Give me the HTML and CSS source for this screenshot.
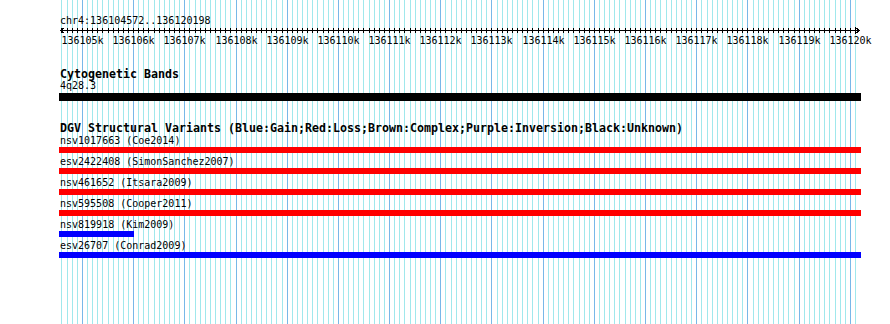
FILE: index.html
```html
<!DOCTYPE html>
<html lang="en">
<head>
  <meta charset="UTF-8">
  <meta name="viewport" content="width=device-width, initial-scale=1.0">
  <link rel="stylesheet" href="styles.css">
</head>
<body>

<div class="panel">
  <svg class="grid" id="grid" width="890" height="324"></svg>

  <div class="tracks">
    <div class="overview">
      <div class="locus">chr4:136104572..136120198</div>
      <svg class="ruler" id="ruler" width="802" height="22"></svg>
    </div>

    <section class="track track-cyto">
      <h2 class="track-title">Cytogenetic Bands</h2>
      <div class="feature">
        <div class="feature-label">4q28.3</div>
        <div class="bar bar-band"></div>
      </div>
    </section>

    <section class="track track-dgv">
      <h2 class="track-title">DGV Structural Variants (Blue:Gain;Red:Loss;Brown:Complex;Purple:Inversion;Black:Unknown)</h2>
      <div class="feature">
        <div class="feature-label">nsv1017663 (Coe2014)</div>
        <div class="bar bar-loss"></div>
      </div>
      <div class="feature">
        <div class="feature-label">esv2422408 (SimonSanchez2007)</div>
        <div class="bar bar-loss"></div>
      </div>
      <div class="feature">
        <div class="feature-label">nsv461652 (Itsara2009)</div>
        <div class="bar bar-loss"></div>
      </div>
      <div class="feature">
        <div class="feature-label">nsv595508 (Cooper2011)</div>
        <div class="bar bar-loss"></div>
      </div>
      <div class="feature">
        <div class="feature-label">nsv819918 (Kim2009)</div>
        <div class="bar bar-gain" style="width: 75px;"></div>
      </div>
      <div class="feature">
        <div class="feature-label">esv26707 (Conrad2009)</div>
        <div class="bar bar-gain"></div>
      </div>
    </section>
  </div>
</div>

<script>
  const SVG_NS = 'http://www.w3.org/2000/svg';
  const start = 136104572;
  const end = 136120198;
  const left = 60;
  const trackWidth = 800;
  const scale = trackWidth / (end - start);
  const grid = document.getElementById('grid');
  const ruler = document.getElementById('ruler');

  function toX(pos) {
    return Math.round(left + (pos - start) * scale);
  }

  function addLine(svg, x1, y1, x2, y2, cls) {
    const line = document.createElementNS(SVG_NS, 'line');
    line.setAttribute('x1', x1);
    line.setAttribute('y1', y1);
    line.setAttribute('x2', x2);
    line.setAttribute('y2', y2);
    line.setAttribute('class', cls);
    svg.appendChild(line);
  }

  // grid + ruler ticks every 100bp
  for (let pos = Math.ceil(start / 100) * 100; pos <= end; pos += 100) {
    const x = toX(pos) + 0.5;
    const major = pos % 1000 === 0;
    addLine(grid, x, 0, x, 324, major ? 'grid-major' : 'grid-minor');
    addLine(ruler, x - left, 1, x - left, 6, 'tick');

    if (major) {
      const label = document.createElementNS(SVG_NS, 'text');
      label.setAttribute('x', x - left);
      label.setAttribute('y', 17);
      label.setAttribute('class', 'tick-label');
      label.textContent = (pos / 1000) + 'k';
      ruler.appendChild(label);
    }
  }

  // main ruler line with arrows on both ends
  addLine(ruler, 0, 3.5, trackWidth, 3.5, 'axis');
  addLine(ruler, 0.5, 3.5, 4.5, 0.5, 'axis');
  addLine(ruler, 0.5, 3.5, 4.5, 6.5, 'axis');
  addLine(ruler, trackWidth - 0.5, 3.5, trackWidth - 4.5, 0.5, 'axis');
  addLine(ruler, trackWidth - 0.5, 3.5, trackWidth - 4.5, 6.5, 'axis');
</script>

</body>
</html>
```

FILE: styles.css
```css
body {
  margin: 0;
  background-color: #ffffff;
  color: #000000;
  font-family: 'DejaVu Sans Mono', 'Liberation Mono', monospace;
}

.panel {
  position: relative;
  width: 890px;
  height: 324px;
  overflow: hidden;
}

.grid {
  position: absolute;
  top: 0;
  left: 0;
  z-index: 0;
}

.grid-minor {
  stroke: #a0e8ec;
  stroke-width: 1;
}

.grid-major {
  stroke: #78b8e8;
  stroke-width: 1;
}

.tracks {
  position: relative;
  z-index: 1;
  padding: 15px 0 0 60px;
  width: 802px;
}

.locus {
  font-size: 10px;
  line-height: 12px;
}

.ruler {
  display: block;
  overflow: visible;
}

.axis,
.tick {
  stroke: #000000;
  stroke-width: 1;
  shape-rendering: crispEdges;
}

.tick-label {
  font-family: 'DejaVu Sans Mono', monospace;
  font-size: 10px;
  text-anchor: middle;
  fill: #000000;
}

.track-title {
  margin: 0;
  font-size: 11.63px;
  font-weight: bold;
  line-height: 11px;
  white-space: nowrap;
}

.track-cyto {
  margin-top: 20px;
}

.track-dgv {
  margin-top: 22px;
}

.track-dgv .track-title {
  margin-bottom: 1px;
}

.feature-label {
  font-size: 10px;
  line-height: 12px;
  white-space: nowrap;
}

.bar {
  width: 802px;
  height: 6px;
  margin: 0 0 3px -1px;
}

.bar-band {
  height: 8px;
  margin: 1px 0 0 -1px;
  background-color: #000000;
}

.bar-loss {
  background-color: #ff0000;
}

.bar-gain {
  background-color: #0000ff;
}
```
